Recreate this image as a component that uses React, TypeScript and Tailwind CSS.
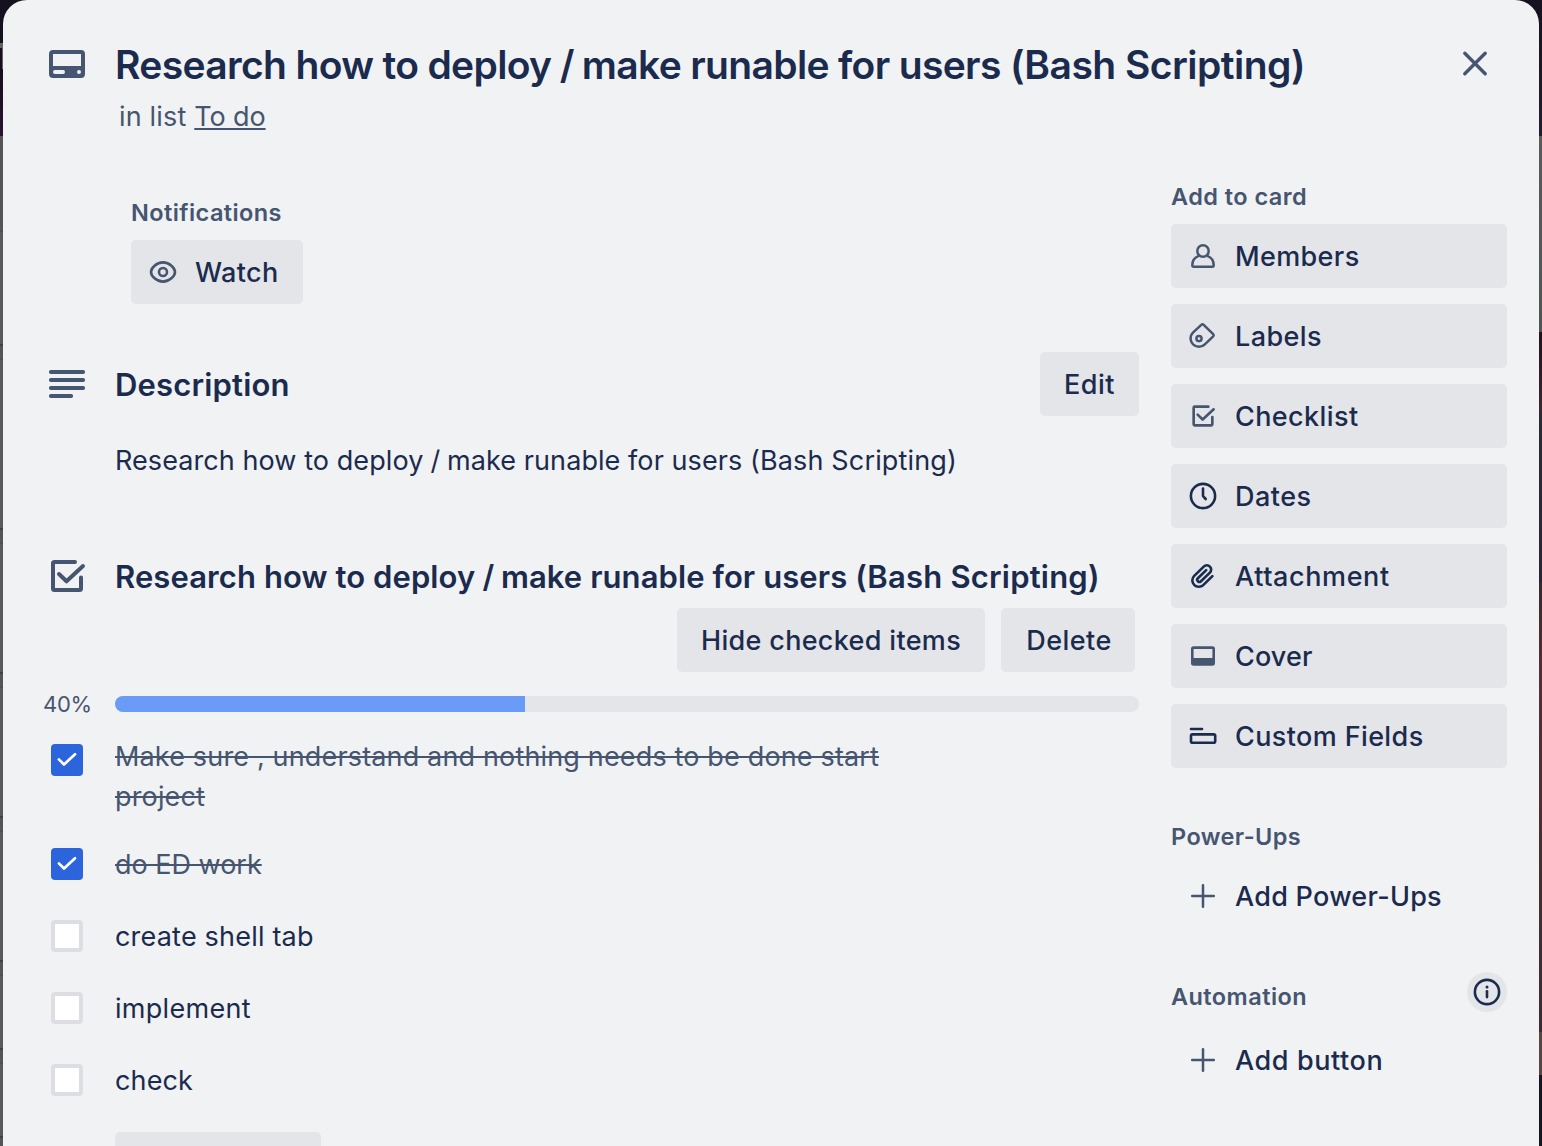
import type { ReactNode } from "react";

const S = "size-8 shrink-0";

function CardIcon() {
  return (
    <svg viewBox="0 0 48 48" className="size-12 shrink-0 text-[#465570]" fill="none">
      <path
        fill="currentColor"
        fillRule="evenodd"
        d="M10 10h28a4 4 0 0 1 4 4v20a4 4 0 0 1-4 4H10a4 4 0 0 1-4-4V14a4 4 0 0 1 4-4Zm0 4v12h28V14H10Zm2 16a2 2 0 0 0 0 4h8a2 2 0 0 0 0-4h-8Zm24 0a2 2 0 1 0 0 4 2 2 0 0 0 0-4Z"
      />
    </svg>
  );
}

function TextIcon() {
  return (
    <svg viewBox="0 0 48 48" className="size-12 shrink-0 text-[#465570]" fill="currentColor">
      <rect x="6" y="10" width="36" height="4" rx="1.8" />
      <rect x="6" y="18" width="36" height="4" rx="1.8" />
      <rect x="6" y="26" width="36" height="4" rx="1.8" />
      <rect x="6" y="34" width="24" height="4" rx="1.8" />
    </svg>
  );
}

function ChecklistIcon({ className }: { className: string }) {
  return (
    <svg
      viewBox="0 0 48 48"
      className={className}
      fill="none"
      stroke="currentColor"
      strokeWidth="4"
      strokeLinecap="round"
      strokeLinejoin="round"
    >
      <path d="M32 10H11.5A1.500 1.500 0 0 0 10 11.500V36.500A1.500 1.500 0 0 0 11.500 38H36.500A1.500 1.500 0 0 0 38 36.500V25.500" />
      <path d="M16 22l7.500 7.300L40 14" />
    </svg>
  );
}

function EyeIcon() {
  return (
    <svg viewBox="0 0 32 32" className={`${S} text-[#465570]`} fill="none" stroke="currentColor" strokeWidth="2.6">
      <path d="M4 16C4 12 9.500 6.400 16 6.400S28 12 28 16 22.500 25.600 16 25.600 4 20 4 16Z" />
      <circle cx="16" cy="16" r="4" />
    </svg>
  );
}

function MemberIcon() {
  return (
    <svg viewBox="0 0 32 32" className={`${S} text-[#465570]`} fill="none" stroke="currentColor" strokeWidth="2.500" strokeLinejoin="round">
      <circle cx="16" cy="11" r="5.700" />
      <path d="M11.800 15.800C7.800 17.300 5.300 21 5.300 25.200Q5.300 26.700 6.800 26.700H25.200Q26.700 26.700 26.700 25.200C26.700 21 24.200 17.300 20.200 15.800" />
    </svg>
  );
}

function LabelIcon() {
  return (
    <svg viewBox="0 0 32 32" className={`${S} text-[#465570]`} fill="none" stroke="currentColor" strokeWidth="2.500" strokeLinejoin="round">
      <path d="M5.900 12.700L14.300 4.800Q15.500 3.700 16.700 4.800L26.200 14.200Q27.200 15.300 26.200 16.400L17.800 24.300A8.300 8.300 0 0 1 5.900 12.700Z" />
      <circle cx="12" cy="18.600" r="2.600" />
    </svg>
  );
}

function ClockIcon() {
  return (
    <svg viewBox="0 0 32 32" className={S} fill="none" stroke="currentColor" strokeWidth="2.600" strokeLinecap="round" strokeLinejoin="round">
      <circle cx="16" cy="16" r="12.100" />
      <path d="M16 8.500V15.200Q16 16 16.500 16.600L18.700 19" />
    </svg>
  );
}

function ClipIcon() {
  return (
    <svg viewBox="0 0 24 24" className={S} fill="currentColor">
      <path d="M11.643 17.965c-1.530 1.495-4.016 1.496-5.542.004a3.773 3.773 0 0 1 .002-5.412l7.147-6.985a2.316 2.316 0 0 1 3.220.004c.893.873.895 2.282.004 3.153l-6.703 6.550a.653.653 0 0 1-.914-.008.620.620 0 0 1 0-.902l6.229-6.087a.941.941 0 0 0 0-1.353.995.995 0 0 0-1.384 0l-6.230 6.087a2.502 2.502 0 0 0 0 3.607 2.643 2.643 0 0 0 3.683.009l6.703-6.550a4.074 4.074 0 0 0-.003-5.859 4.306 4.306 0 0 0-5.986 0l-7.148 6.985a5.655 5.655 0 0 0 0 8.118c2.290 2.237 6.015 2.238 8.308-.005l6.712-6.559a.941.941 0 0 0 0-1.353.995.995 0 0 0-1.385 0l-6.711 6.560z" />
    </svg>
  );
}

function CoverIcon() {
  return (
    <svg viewBox="0 0 32 32" className={`${S} text-[#465570]`} fill="currentColor">
      <path
        fillRule="evenodd"
        d="M6.600 6.200H25.400A2.600 2.600 0 0 1 28 8.800V23.100A2.600 2.600 0 0 1 25.400 25.700H6.600A2.600 2.600 0 0 1 4 23.100V8.800A2.600 2.600 0 0 1 6.600 6.200ZM6.600 9V18H25.400V9Z"
      />
    </svg>
  );
}

function FieldsIcon() {
  return (
    <svg viewBox="0 0 32 32" className={S} fill="none" stroke="currentColor" strokeWidth="2.600" strokeLinecap="round">
      <path d="M4 9H15" />
      <rect x="4" y="14.400" width="24.200" height="8.300" rx="1.500" />
    </svg>
  );
}

function PlusIcon() {
  return (
    <svg viewBox="0 0 32 32" className={`${S} text-[#465570]`} fill="none" stroke="currentColor" strokeWidth="2.500" strokeLinecap="round">
      <path d="M16 5.200V26.800M5.200 16H26.800" />
    </svg>
  );
}

function InfoIcon() {
  return (
    <svg viewBox="0 0 32 32" className="size-8" fill="none" stroke="currentColor" strokeWidth="2.600">
      <circle cx="16" cy="16" r="12.100" />
      <path d="M16 15.300V21.100" strokeLinecap="round" />
      <circle cx="16" cy="10.900" r="1.500" fill="currentColor" stroke="none" />
    </svg>
  );
}

function CloseIcon() {
  return (
    <svg viewBox="0 0 48 48" className="size-12" fill="none" stroke="currentColor" strokeWidth="3.400" strokeLinecap="round">
      <path d="M13.800 13.300L34.200 33.700M34.200 13.300L13.800 33.700" />
    </svg>
  );
}

const sideButtons: { label: string; icon: ReactNode; track: string }[] = [
  { label: "Members", icon: <MemberIcon />, track: "tracking-[0.36px]" },
  { label: "Labels", icon: <LabelIcon />, track: "tracking-[0.42px]" },
  { label: "Checklist", icon: <ChecklistIcon className="size-8 shrink-0 text-[#465570]" />, track: "tracking-[0.4px]" },
  { label: "Dates", icon: <ClockIcon />, track: "tracking-[0.5px]" },
  { label: "Attachment", icon: <ClipIcon />, track: "tracking-[0.6px]" },
  { label: "Cover", icon: <CoverIcon />, track: "tracking-[0.12px]" },
  { label: "Custom Fields", icon: <FieldsIcon />, track: "tracking-[0.38px]" },
];

const items = [
  { text: "Make sure , understand and nothing needs to be done start project", done: true, track: "tracking-[0.155px]", row: "mt-5", box: "mt-2" },
  { text: "do ED work", done: true, track: "tracking-[-0.013px]", row: "mt-7", box: "mt-1" },
  { text: "create shell tab", done: false, track: "tracking-[0.2px]", row: "mt-8", box: "mt-1" },
  { text: "implement", done: false, track: "tracking-[0.3px]", row: "mt-8", box: "mt-1" },
  { text: "check", done: false, track: "tracking-[0.12px]", row: "mt-8", box: "mt-1" },
];

function SideHeading({ children, track }: { children: ReactNode; track: string }) {
  return <h3 className={`h-10 text-[23.5px] leading-[42px] font-semibold text-[#465570] ${track}`}>{children}</h3>;
}

function Checkbox({ done, className }: { done: boolean; className: string }) {
  return done ? (
    <span className={`size-8 shrink-0 rounded bg-[#2c64dc] ${className}`}>
      <svg viewBox="0 0 32 32" className="size-8" fill="none" stroke="#fff" strokeWidth="2.700" strokeLinecap="round" strokeLinejoin="round">
        <path d="M7.900 15.400L13 20.500L24 10.200" />
      </svg>
    </span>
  ) : (
    <span className={`size-8 shrink-0 rounded border-4 border-[#dddee4] bg-white ${className}`} />
  );
}

// Slivers of the board that stay visible on both sides of the dialog.
const leftSegments = ["h-[115px]", "h-[171px]", "h-[131px]", "h-[131px]", "h-[131px]", "h-[75px]", "h-[75px]"];

function BoardLeft() {
  return (
    <div className="flex w-[3px] shrink-0 flex-col bg-[#535557]">
      <div className="h-[43px] shrink-0 bg-[#15111f]" />
      <div className="h-[5px] shrink-0 bg-[#636363]" />
      <div className="h-[21px] shrink-0 border-r border-[#636363] bg-[#180d1e]" />
      <div className="h-[67px] shrink-0 bg-linear-to-b from-[#180d1e] to-[#2a1430]" />
      <div className="h-[95px] shrink-0 bg-[#555555]" />
      {leftSegments.map((h, i) => (
        <div key={i} className={`mb-[13px] shrink-0 border-t border-b-2 border-t-[#4a4d52] border-b-[#3d4046] bg-[#5a5a5a] ${h}`} />
      ))}
    </div>
  );
}

function BoardRight() {
  return (
    <div className="flex w-[3px] shrink-0 flex-col">
      <div className="h-[136px] shrink-0 bg-linear-to-b from-[#171220] to-[#241d30]" />
      <div className="h-[196px] shrink-0 bg-linear-to-b from-[#5a5a5a] to-[#4f5552]" />
      <div className="h-20 shrink-0 bg-linear-to-b from-[#24121f] to-[#3f2530]" />
      <div className="h-[170px] shrink-0 bg-linear-to-b from-[#2a2a38] to-[#2b2533]" />
      <div className="h-[450px] shrink-0 bg-linear-to-b from-[#3b2730] via-[#552f33] via-20% to-[#3c2b33]" />
      <div className="h-[43px] shrink-0 bg-[#594640]" />
      <div className="flex-1 bg-[#15161f]" />
    </div>
  );
}

export default function App() {
  return (
    <div className="flex h-[1146px] w-[1542px] overflow-hidden bg-[#15111f] font-['Inter',sans-serif] text-[#1b2b4d]">
      <BoardLeft />
      <div className="flex-1 rounded-t-3xl bg-[#f1f2f4] pr-8 pl-10">
        <header className="flex h-44 pt-10">
          <CardIcon />
          <div className="ml-6 flex-1">
            <h1 className="h-[50px] text-[39px] leading-[50px] font-semibold tracking-[-0.655px] whitespace-nowrap">
              Research how to deploy<span className="tracking-[-1.35px]"> / </span>make runable for users{" "}
              <span className="tracking-[-0.53px]">(Bash Scripting)</span>
            </h1>
            <p className="mt-1.5 ml-1 h-10 text-[27px] leading-[42px] text-[#465570]">
              <span className="tracking-[0.18px]">in list </span>
              <a className="tracking-[-0.1px] underline decoration-2 underline-offset-2">To do</a>
            </p>
          </div>
          <button className="mr-2 size-12 text-[#465570]">
            <CloseIcon />
          </button>
        </header>

        <div className="flex gap-8">
          <main className="w-[1096px]">
            <section className="ml-[88px] pt-4">
              <SideHeading track="tracking-[0.42px]">Notifications</SideHeading>
              <button className="mt-2 flex h-16 w-[172px] items-center gap-4 rounded-[5px] bg-[#e4e5e9] pl-4 text-[27px] font-medium tracking-[0.4px]">
                <EyeIcon />
                <span className="mt-0.5">Watch</span>
              </button>
            </section>

            <section className="mt-12">
              <div className="flex h-16 items-center">
                <TextIcon />
                <h2 className="ml-6 flex-1 pt-0.5 text-[31px] leading-10 font-semibold tracking-[0.17px]">Description</h2>
                <button className="h-16 w-[99px] rounded-[5px] bg-[#e4e5e9] pt-0.5 text-[27px] font-medium tracking-[0.5px]">Edit</button>
              </div>
              <p className="mt-6 ml-[72px] h-10 text-[27px] leading-[42px] tracking-[0.075px]">
                Research how to deploy<span className="tracking-[-0.4px]"> / </span>make runable for users{" "}
                <span className="tracking-[0.15px]">(Bash Scripting)</span>
              </p>
            </section>

            <section className="mt-[72px]">
              <div className="flex h-12 items-center">
                <ChecklistIcon className="size-12 shrink-0 text-[#465570]" />
                <h2 className="ml-6 pt-0.5 text-[31px] leading-10 font-semibold tracking-[0.09px] whitespace-nowrap">
                  Research how to deploy<span className="tracking-[-0.6px]"> / </span>make runable for users{" "}
                  <span className="tracking-[0.2px]">(Bash Scripting)</span>
                </h2>
              </div>
              <div className="mt-2 mr-1 flex justify-end gap-4 text-[27px] font-medium">
                <button className="h-16 w-[308px] rounded-[5px] bg-[#e4e5e9] pt-0.5 tracking-[0.32px]">Hide checked items</button>
                <button className="h-16 w-[134px] rounded-[5px] bg-[#e4e5e9] pt-0.5 pl-0.5 tracking-[0.45px]">Delete</button>
              </div>
              <div className="mt-5 flex h-6 items-center">
                <span className="w-[72px] text-[22px] leading-6 tracking-[-0.3px] text-[#465570]">40%</span>
                <div className="h-4 flex-1 overflow-hidden rounded-full bg-[#e4e5e8]">
                  <div className="h-4 w-2/5 bg-[#699bf7]" />
                </div>
              </div>
              <ul>
                {items.map((it) => (
                  <li key={it.text} className={`flex pl-2 ${it.row}`}>
                    <Checkbox done={it.done} className={it.box} />
                    <span
                      className={`-mb-px ml-8 w-[800px] pt-px text-[27px] leading-10 ${it.track} ${
                        it.done ? "text-[#465570] line-through decoration-2" : ""
                      }`}
                    >
                      {it.text}
                    </span>
                  </li>
                ))}
              </ul>
              <button className="mt-8 ml-[72px] block h-16 w-[206px] rounded-[5px] bg-[#e4e5e9]" aria-label="Add item" />
            </section>
          </main>

          <aside className="w-[336px]">
            <SideHeading track="tracking-[0.45px]">Add to card</SideHeading>
            <div className="mt-2 flex flex-col gap-4">
              {sideButtons.map((b) => (
                <button key={b.label} className="flex h-16 items-center gap-4 rounded-[5px] bg-[#e4e5e9] pl-4 text-[27px] font-medium">
                  {b.icon}
                  <span className={`mt-0.5 ${b.track}`}>{b.label}</span>
                </button>
              ))}
            </div>
            <div className="mt-12">
              <SideHeading track="tracking-[0.4px]">Power-Ups</SideHeading>
              <button className="mt-2 flex h-16 items-center gap-4 pl-4 text-[27px] font-medium tracking-[0.27px]">
                <PlusIcon />
                <span className="mt-0.5">Add Power-Ups</span>
              </button>
            </div>
            <div className="mt-11">
              <div className="flex justify-between">
                <div className="pt-1">
                  <SideHeading track="tracking-[0.44px]">Automation</SideHeading>
                </div>
                <button className="grid size-10 place-items-center rounded-full bg-[#e4e5e9]">
                  <InfoIcon />
                </button>
              </div>
              <button className="mt-3 flex h-16 items-center gap-4 pl-4 text-[27px] font-medium tracking-[0.6px]">
                <PlusIcon />
                <span className="mt-0.5">Add button</span>
              </button>
            </div>
          </aside>
        </div>
      </div>
      <BoardRight />
    </div>
  );
}
